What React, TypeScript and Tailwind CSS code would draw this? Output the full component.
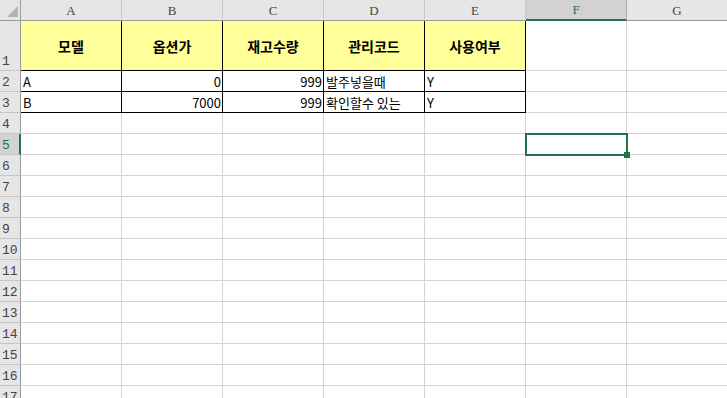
import React from 'react';

const COLS = ['A', 'B', 'C', 'D', 'E', 'F', 'G'];
const ROW_COUNT = 17;

type CellData = { text: string; align?: 'left' | 'right' | 'center' };

const DATA: Record<string, CellData> = {
  A1: { text: '모델', align: 'center' },
  B1: { text: '옵션가', align: 'center' },
  C1: { text: '재고수량', align: 'center' },
  D1: { text: '관리코드', align: 'center' },
  E1: { text: '사용여부', align: 'center' },
  A2: { text: 'A' },
  B2: { text: '0', align: 'right' },
  C2: { text: '999', align: 'right' },
  D2: { text: '발주넣을때' },
  E2: { text: 'Y' },
  A3: { text: 'B' },
  B3: { text: '7000', align: 'right' },
  C3: { text: '999', align: 'right' },
  D3: { text: '확인할수 있는' },
  E3: { text: 'Y' },
};

const SEL_COL = 'F';
const SEL_ROW = 5;

function ColumnHeader({ label }: { label: string }) {
  const selected = label === SEL_COL;
  return (
    <div
      className={
        selected
          ? 'flex items-center justify-center bg-[#d2d2d2] border-r border-r-[#ababab] border-b-2 border-b-[#217346] text-[#217346]'
          : 'flex items-center justify-center bg-[#e6e6e6] border-r border-r-[#c6c6c6] border-b border-b-[#9b9b9b] text-[#444]'
      }
    >
      <span className="font-['Liberation_Serif',serif] text-[13px] leading-none">{label}</span>
    </div>
  );
}

function RowHeader({ row }: { row: number }) {
  const selected = row === SEL_ROW;
  return (
    <div
      className={
        selected
          ? 'flex items-end pl-[2px] pb-[1px] bg-[#d2d2d2] border-r-2 border-r-[#217346] border-b border-b-[#c6c6c6] text-[#217346]'
          : 'flex items-end pl-[2px] pb-[1px] bg-[#e6e6e6] border-r border-r-[#9b9b9b] border-b border-b-[#c6c6c6] text-[#444]'
      }
    >
      <span className="font-['Liberation_Mono',monospace] text-[13px] leading-[15px]">{row}</span>
    </div>
  );
}

function Cell({ col, row }: { col: string; row: number }) {
  const key = `${col}${row}`;
  const data = DATA[key];
  const inTable = row <= 3 && ['A', 'B', 'C', 'D', 'E'].includes(col);
  const isHead = row === 1 && inTable;
  const selected = col === SEL_COL && row === SEL_ROW;

  const border = inTable ? 'border-r border-b border-black' : 'border-r border-b border-[#d4d4d4]';
  const bg = isHead ? 'bg-[#ffff99]' : 'bg-white';
  let layout = 'flex items-end pb-[1px] pl-[2px]';
  if (data?.align === 'center') layout = 'flex items-center justify-center';
  else if (data?.align === 'right') layout = 'flex items-end justify-end pb-[1px] pr-[1px]';

  return (
    <div className={`relative ${border} ${bg} ${layout}`}>
      {data && (
        <span
          className={
            isHead
              ? "font-['Noto_Sans_CJK_KR',sans-serif] text-[14px] font-bold leading-none text-black"
              : "font-['Noto_Sans_CJK_KR',sans-serif] text-[13px] leading-[16px] text-black whitespace-nowrap"
          }
        >
          {data.text}
        </span>
      )}
      {selected && (
        <div className="absolute -left-[1px] -top-[1px] w-[103px] h-[23px] border-2 border-[#217346] z-10">
          <div className="absolute -right-[4px] -bottom-[4px] w-[6px] h-[6px] bg-[#217346]" />
        </div>
      )}
    </div>
  );
}

export default function App() {
  const rows = Array.from({ length: ROW_COUNT }, (_, i) => i + 1);
  return (
    <div className="w-[727px] h-[398px] overflow-hidden bg-white">
      <div className="grid grid-cols-[21px_repeat(7,101px)] grid-rows-[21px_50px_repeat(16,21px)]">
        <div className="relative bg-[#e6e6e6] border-r border-r-[#9b9b9b] border-b border-b-[#9b9b9b]">
          <svg className="absolute left-[7px] top-[6px]" width="11" height="11" viewBox="0 0 11 11">
            <polygon points="11,0 11,11 0,11" fill="#b4b4b4" />
          </svg>
        </div>
        {COLS.map((c) => (
          <ColumnHeader key={c} label={c} />
        ))}
        {rows.map((r) => (
          <React.Fragment key={r}>
            <RowHeader row={r} />
            {COLS.map((c) => (
              <Cell key={c + r} col={c} row={r} />
            ))}
          </React.Fragment>
        ))}
      </div>
    </div>
  );
}
